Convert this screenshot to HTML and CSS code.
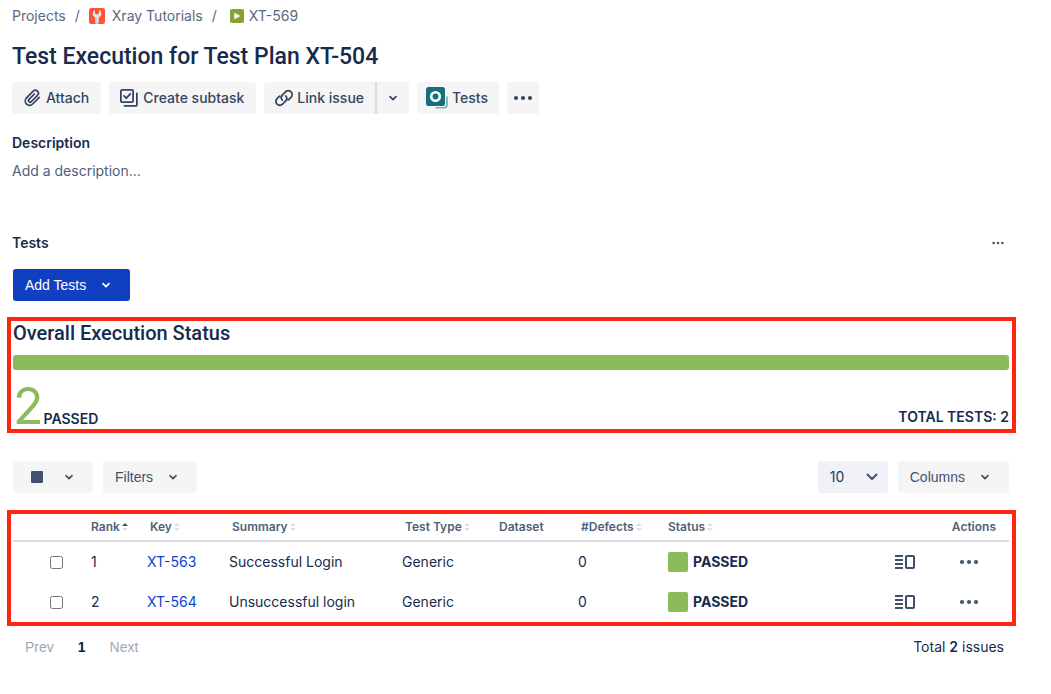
FILE: index.html
```html
<!DOCTYPE html>
<html lang="en">
<head>
<meta charset="utf-8">
<title>Test Execution for Test Plan XT-504</title>
<link rel="stylesheet" href="styles.css">
</head>
<body>
<svg class="defs" aria-hidden="true">
  <symbol id="chevron" viewBox="0 0 16 16"><path d="M5 6.6l3 3 3-3" fill="none" stroke="currentColor" stroke-width="1.7" stroke-linecap="round" stroke-linejoin="round"/></symbol>
  <symbol id="dots" viewBox="0 0 20 16"><circle cx="3" cy="8" r="2.1" fill="currentColor"/><circle cx="10" cy="8" r="2.1" fill="currentColor"/><circle cx="17" cy="8" r="2.1" fill="currentColor"/></symbol>
  <symbol id="sort" viewBox="0 0 6 8"><path d="M0 3L3 0l3 3z"/><path d="M0 5l3 3 3-3z"/></symbol>
  <symbol id="sort-asc" viewBox="0 0 6 8"><path d="M0 3L3 0l3 3z" fill="#42526e"/><path d="M0 5l3 3 3-3z"/></symbol>
  <symbol id="panel" viewBox="0 0 20 16"><path d="M0 2h8M0 6h8M0 10h8M0 14h8" fill="none" stroke="currentColor" stroke-width="1.8"/><rect x="11" y="2" width="8" height="12" rx=".8" fill="none" stroke="currentColor" stroke-width="2"/></symbol>
</svg>
<main class="page">
  <nav class="breadcrumbs" aria-label="Breadcrumbs">
    <a href="#">Projects</a>
    <span class="slash">/</span>
    <a href="#" class="crumb-project">
      <svg width="16" height="16" viewBox="0 0 16 16"><rect width="16" height="16" rx="2.5" fill="#ff5230"/><path d="M6 1.800v3.400L7.200 6.300h1.600L10 5.200V1.800a4.300 4.300 0 0 1 .6 7.300l-.8.6v4.500a1.800 1.800 0 0 1-3.600 0V9.700l-.8-.6A4.300 4.300 0 0 1 6 1.800z" fill="#dfe3e9"/><path d="M6.200 9.700h1.500v6a1.800 1.800 0 0 1-1.500-1.500z" fill="#c1c7d0"/></svg>
      Xray Tutorials</a>
    <span class="slash">/</span>
    <a href="#" class="crumb-issue">
      <svg width="14" height="14" viewBox="0 0 14 14"><rect width="14" height="14" rx="2" fill="#84a332"/><path d="M4.300 3.800L10.200 7l-5.900 3.200z" fill="#fff"/></svg>
      XT-569</a>
  </nav>

  <h1>Test Execution for Test Plan XT-504</h1>

  <div class="actions">
    <button class="btn btn-attach"><svg width="20" height="20" viewBox="0 0 20 20"><path d="M17.300 9.300l-6.600 6.700a4.300 4.300 0 0 1-6.200-6.100l6.700-6.700a3 3 0 0 1 4.300 4.200l-6.400 6.400a1.600 1.600 0 0 1-2.300-2.200l5.600-5.600" fill="none" stroke="currentColor" stroke-width="1.7" stroke-linecap="round"/></svg>Attach</button>
    <button class="btn btn-subtask"><svg width="20" height="20" viewBox="0 0 20 20"><rect x="1.900" y="1.900" width="12.200" height="12.200" rx="1.200" fill="none" stroke="currentColor" stroke-width="1.8"/><path d="M5 7.800l2.300 2.300 4-4.300M17.900 5.500v11.200a1.200 1.200 0 0 1-1.200 1.200H5.500" fill="none" stroke="currentColor" stroke-width="1.8" stroke-linecap="round"/></svg>Create subtask</button>
    <div class="split">
      <button class="btn btn-link"><svg width="20" height="20" viewBox="0 0 20 20"><path d="M8.300 12.100a3.800 3.800 0 0 1 .2-5.200l3-3a3.850 3.850 0 0 1 5.500 5.400l-2.600 2.600M11.800 8a3.800 3.800 0 0 1-.3 5.200l-3 2.900a3.850 3.850 0 0 1-5.500-5.400l2.600-2.600" fill="none" stroke="currentColor" stroke-width="1.8" stroke-linecap="round"/></svg>Link issue</button>
      <button class="btn btn-more-links" aria-label="Link options"><svg width="16" height="16"><use href="#chevron"/></svg></button>
    </div>
    <button class="btn btn-tests"><svg width="22" height="22" viewBox="0 0 22 22"><path d="M20.800 9.500v8.300a2.800 2.800 0 0 1-2.800 2.800H9.500" fill="none" stroke="#7bb0b7" stroke-width="2"/><rect width="20" height="20" rx="3" fill="#f7f7f7"/><rect width="19" height="19" rx="2.5" fill="#13707e"/><circle cx="9.500" cy="9.500" r="4.300" fill="none" stroke="#fff" stroke-width="2.600"/></svg>Tests</button>
    <button class="btn btn-dots" aria-label="More actions"><svg width="20" height="16"><use href="#dots"/></svg></button>
  </div>

  <section class="description">
    <h2>Description</h2>
    <p>Add a description...</p>
  </section>

  <section class="tests">
    <header class="tests-head">
      <h2>Tests</h2>
      <button class="icon-btn" aria-label="Tests options"><svg width="14" height="10" viewBox="0 0 20 16"><use href="#dots"/></svg></button>
    </header>
    <button class="drop primary">Add Tests<svg width="16" height="16"><use href="#chevron"/></svg></button>
  </section>

  <section class="frame status">
    <h3>Overall Execution Status</h3>
    <div class="bar" role="img" aria-label="2 of 2 tests passed"></div>
    <div class="totals">
      <div class="passed"><span class="count">2</span><strong>PASSED</strong></div>
      <strong class="total">TOTAL TESTS: 2</strong>
    </div>
  </section>

  <div class="toolbar">
    <button class="drop bulk" aria-label="Bulk selection"><span class="square"></span><svg width="16" height="16"><use href="#chevron"/></svg></button>
    <button class="drop">Filters<svg width="16" height="16"><use href="#chevron"/></svg></button>
    <span class="page-size">
      <select aria-label="Rows per page"><option>10</option><option>25</option></select>
      <svg width="12" height="8" viewBox="0 0 12 8"><path d="M1.500 1.500L6 6l4.500-4.500" fill="none" stroke="#42526e" stroke-width="2" stroke-linecap="round" stroke-linejoin="round"/></svg>
    </span>
    <button class="drop columns">Columns<svg width="16" height="16"><use href="#chevron"/></svg></button>
  </div>

  <div class="frame list">
    <table>
      <colgroup><col class="c-check"><col class="c-rank"><col class="c-key"><col><col class="c-type"><col class="c-data"><col class="c-defects"><col class="c-status"><col class="c-view"><col class="c-actions"></colgroup>
      <thead>
        <tr>
          <td></td>
          <th class="flush">Rank<svg width="6" height="8"><use href="#sort-asc"/></svg></th>
          <th>Key<svg width="6" height="8"><use href="#sort"/></svg></th>
          <th>Summary<svg width="6" height="8"><use href="#sort"/></svg></th>
          <th>Test Type<svg width="6" height="8"><use href="#sort"/></svg></th>
          <th class="flush">Dataset</th>
          <th>#Defects<svg width="6" height="8"><use href="#sort"/></svg></th>
          <th class="flush">Status<svg width="6" height="8"><use href="#sort"/></svg></th>
          <td></td>
          <th class="end">Actions</th>
        </tr>
      </thead>
      <tbody>
        <tr>
          <td class="check"><input type="checkbox" aria-label="Select XT-563"></td>
          <td>1</td>
          <td><a href="#">XT-563</a></td>
          <td>Successful Login</td>
          <td>Generic</td>
          <td></td>
          <td>0</td>
          <td><div class="state"><span class="swatch"></span>PASSED</div></td>
          <td><button class="icon-btn" aria-label="Open XT-563 details"><svg width="20" height="16"><use href="#panel"/></svg></button></td>
          <td class="more"><button class="icon-btn" aria-label="XT-563 actions"><svg width="20" height="16"><use href="#dots"/></svg></button></td>
        </tr>
        <tr>
          <td class="check"><input type="checkbox" aria-label="Select XT-564"></td>
          <td>2</td>
          <td><a href="#">XT-564</a></td>
          <td>Unsuccessful login</td>
          <td>Generic</td>
          <td></td>
          <td>0</td>
          <td><div class="state"><span class="swatch"></span>PASSED</div></td>
          <td><button class="icon-btn" aria-label="Open XT-564 details"><svg width="20" height="16"><use href="#panel"/></svg></button></td>
          <td class="more"><button class="icon-btn" aria-label="XT-564 actions"><svg width="20" height="16"><use href="#dots"/></svg></button></td>
        </tr>
      </tbody>
    </table>
  </div>

  <footer class="pager">
    <nav aria-label="Pagination">
      <button disabled>Prev</button>
      <button class="current" aria-current="page">1</button>
      <button disabled>Next</button>
    </nav>
    <p>Total <strong>2</strong> issues</p>
  </footer>
</main>
</body>
</html>
```

FILE: styles.css
```css
* { box-sizing: border-box; }
body {
  margin: 0;
  background: #fff;
  color: #172b4d;
  font: 14px/20px Inter, sans-serif;
}
h1, h2, h3, p { margin: 0; }
a { text-decoration: none; color: #0c46d0; }
button {
  border: 0;
  background: none;
  padding: 0;
  color: inherit;
  font: inherit;
  cursor: pointer;
}
svg { display: block; flex: none; }
.defs { display: none; }
.page { padding: 6px 35px 24px 7px; }

.breadcrumbs {
  display: flex;
  align-items: center;
  padding-left: 5px;
}
.breadcrumbs a, .slash { color: #5a6880; }
.breadcrumbs a { display: flex; align-items: center; }
.slash { margin: 0 9px; }
.crumb-project { gap: 7px; }
.crumb-issue { gap: 5px; margin-left: 4px; }

h1 {
  margin-top: 17px;
  padding-left: 5px;
  font-family: Roboto, sans-serif;
  font-size: 23px;
  line-height: 28px;
  font-weight: 500;
}

.actions {
  display: flex;
  gap: 8px;
  margin-top: 11px;
  padding-left: 5px;
}
.btn {
  display: flex;
  align-items: center;
  height: 32px;
  padding: 0 12px 0 10px;
  border-radius: 3px;
  background: #f5f5f5;
  color: #344563;
  font-weight: 500;
}
.btn-attach, .btn-subtask { gap: 4px; }
.btn-link { gap: 3px; padding-right: 11px; border-radius: 3px 0 0 3px; }
.split { display: flex; }
.btn-more-links {
  padding: 0 8px;
  border-left: 2px solid #dcdde3;
  border-radius: 0 3px 3px 0;
}
.btn-tests { gap: 4px; padding: 0 11px 0 9px; }
.btn-dots { padding: 0 6px; }

h2 { font-size: 14px; line-height: 20px; font-weight: 600; }
.description { margin-top: 19px; padding-left: 5px; }
.description p { margin-top: 8px; color: #505f79; }

.tests { margin-top: 52px; padding-left: 5px; }
.tests-head {
  display: flex;
  justify-content: space-between;
  align-items: center;
  padding-right: 11px;
}
.icon-btn { display: block; color: #42526e; }
.drop {
  display: flex;
  align-items: center;
  gap: 12px;
  height: 32px;
  padding: 0 16px 0 12px;
  border-radius: 3px;
  background: #f5f5f5;
  color: #42526e;
  font-family: "Liberation Sans", Arial, sans-serif;
}
.primary { margin: 16px 0 0 1px; background: #1040c0; color: #fff; }

.frame { border: 4px solid #ff250f; padding: 0 3px 0 2px; }
.status { margin-top: 16px; }
h3 {
  font-family: Roboto, sans-serif;
  font-size: 20px;
  line-height: 24px;
  font-weight: 500;
}
.bar {
  height: 15px;
  margin-top: 10px;
  border-radius: 3px;
  background: #8bbb5d;
}
.totals {
  display: flex;
  justify-content: space-between;
  align-items: flex-end;
  height: 59px;
}
.passed { display: flex; align-items: baseline; }
.count { color: #8bbb5d; font-size: 50px; line-height: 46px; }
.total { padding-bottom: 2px; }
strong { font-weight: 600; }

.toolbar {
  display: flex;
  gap: 10px;
  margin-top: 28px;
  padding: 0 7px 0 6px;
}
.bulk { padding-left: 18px; gap: 18px; }
.square { width: 12px; height: 12px; border-radius: 1px; background: #42526e; }
.page-size { display: grid; align-items: center; margin-left: auto; }
.page-size > * { grid-area: 1 / 1; }
.page-size svg { justify-self: end; margin-right: 10px; pointer-events: none; }
select {
  appearance: none;
  width: 70px;
  height: 32px;
  padding: 0 12px;
  border: 0;
  border-radius: 3px;
  background: #f1f2f7;
  color: #253858;
  font: inherit;
}

.list { margin-top: 17px; }
table { width: 100%; table-layout: fixed; border-collapse: collapse; }
.c-check { width: 74px; }
.c-rank { width: 56px; }
.c-key { width: 82px; }
.c-type { width: 97px; }
.c-data { width: 79px; }
.c-defects { width: 90px; }
.c-status { width: 227px; }
.c-view { width: 49px; }
.c-actions { width: 69px; }
thead tr { height: 27px; border-bottom: 2px solid #dcdde3; }
tbody tr { height: 41px; }
tbody tr:last-child { height: 40px; }
th, td { padding: 0 0 0 4px; text-align: left; white-space: nowrap; }
th {
  padding-left: 7px;
  color: #505f79;
  font-size: 12px;
  line-height: 16px;
  font-weight: 600;
}
th svg { display: inline-block; margin-left: 2px; fill: #dcdfe5; }
.flush { padding-left: 4px; }
th.end { padding: 0 13px 0 0; text-align: right; }
.check { padding-left: 37px; }
.check input { display: block; width: 13px; height: 13px; margin: 0; }
.state { display: flex; align-items: center; gap: 5px; font-weight: 700; }
.swatch { width: 20px; height: 20px; border-radius: 2px; background: #8bbb5d; }
.more { padding-left: 19px; }

.pager {
  display: flex;
  justify-content: space-between;
  margin-top: 11px;
  padding: 0 12px 0 18px;
}
.pager nav { display: flex; gap: 24px; }
.pager button {
  color: #a0a8b5;
  font-family: "Liberation Sans", Arial, sans-serif;
}
.pager .current { color: #091e42; font-weight: 700; }
```
